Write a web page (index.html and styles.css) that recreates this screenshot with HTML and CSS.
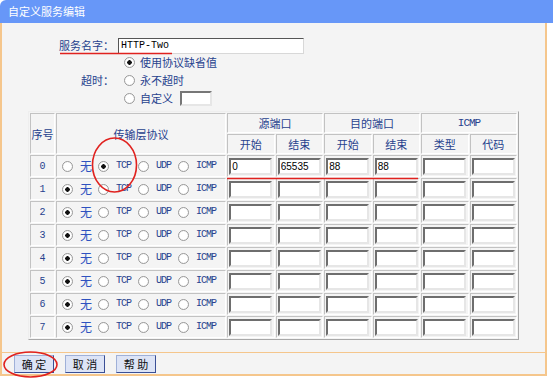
FILE: index.html
```html
<!DOCTYPE html>
<html lang="zh-CN">
  <head>
    <meta charset="UTF-8" />
    <title>自定义服务编辑</title>
    <link rel="stylesheet" href="styles.css">
  </head>
  <body>
    <div class="page">
      <div class="title">自定义服务编辑</div>

      <div class="panel">
        <!-- Service name + timeout -->
        <div class="form-grid">
          <label class="lbl">服务名字：</label>
          <div><input class="name-input" type="text" value="HTTP-Two"></div>

          <label class="lbl lbl-timeout">超时：</label>
          <div class="opt"><input type="radio" name="tmo" checked><span>使用协议缺省值</span></div>
          <div class="opt"><input type="radio" name="tmo"><span>永不超时</span></div>
          <div class="opt"><input type="radio" name="tmo"><span>自定义</span><input class="tmo-input" type="text"></div>
        </div>

        <!-- Rule table -->
        <table class="rules">
          <colgroup>
            <col class="c-no">
            <col class="c-proto">
            <col span="6" class="c-port">
          </colgroup>
          <thead>
            <tr>
              <th rowspan="2">序号</th>
              <th rowspan="2">传输层协议</th>
              <th colspan="2">源端口</th>
              <th colspan="2">目的端口</th>
              <th colspan="2" class="mono">ICMP</th>
            </tr>
            <tr>
              <th>开始</th><th>结束</th>
              <th>开始</th><th>结束</th>
              <th>类型</th><th>代码</th>
            </tr>
          </thead>
          <tbody id="rule-rows"></tbody>
        </table>
      </div>

      <div class="footer">
        <button class="btn">确 定</button>
        <button class="btn">取 消</button>
        <button class="btn">帮 助</button>
      </div>

      <!-- red annotation marks drawn over the screenshot -->
      <svg class="marks" width="553" height="379" viewBox="0 0 553 379">
        <line x1="60" y1="53.5" x2="172" y2="53.5" />
        <ellipse cx="114.5" cy="165" rx="22" ry="27" />
        <line x1="227" y1="178.5" x2="418" y2="178.5" />
        <ellipse cx="30.5" cy="364.5" rx="26.5" ry="12.5" />
      </svg>
    </div>

    <script>
      // rows 0..7, row 0 is the TCP rule
      const rows = [
        { proto: "tcp", ports: ["0", "65535", "88", "88", "", ""] },
      ];
      for (let i = 1; i < 8; i++) rows.push({ proto: "none", ports: ["", "", "", "", "", ""] });

      const body = document.getElementById("rule-rows");
      rows.forEach((r, i) => {
        const tr = document.createElement("tr");
        const protos = [["none", "无", "cjk"], ["tcp", "TCP", "mono"], ["udp", "UDP", "mono"], ["icmp", "ICMP", "mono"]];
        const radios = protos.map(([v, t, c]) =>
          `<label class="proto"><input type="radio" name="p${i}" ${r.proto === v ? "checked" : ""}><span class="${c}">${t}</span></label>`
        ).join("");
        tr.innerHTML =
          `<td class="no">${i}</td><td class="protos">${radios}</td>` +
          r.ports.map((p) => `<td><input class="port" type="text" value="${p}"></td>`).join("");
        body.appendChild(tr);
      });
    </script>
  </body>
</html>
```

FILE: styles.css
```css
body {
  margin: 0;
  background: #fff;
  font-family: "Noto Sans CJK SC", "DejaVu Sans", sans-serif;
  font-size: 11px;
  color: #27428e;
}

.page {
  position: relative;
  width: 553px;
  height: 379px;
}

.title {
  height: 23px;
  line-height: 23px;
  padding-left: 8px;
  background: #6797f8;
  color: #fff;
  font-size: 11px;
  border-top-left-radius: 6px;
}

.panel {
  width: 547px;
  height: 329px;
  box-sizing: border-box;
  padding-top: 13px;
  background: #f4f4f4;
  border-left: 2px solid #f5c68c;
  border-right: 2px solid #f5c68c;
}

.form-grid {
  display: grid;
  grid-template-columns: 112px auto;
  grid-template-rows: 17px 18px 18px 18px;
  column-gap: 4px;
  align-items: center;
}

.lbl {
  text-align: right;
  font-size: 11px;
}

.lbl-timeout {
  grid-row: 2 / 5;
}

.name-input {
  width: 186px;
  height: 16px;
  box-sizing: border-box;
  padding: 0 2px;
  background: #fff;
  border: 1px solid #d8d8d8;
  border-top-color: #555;
  border-left-color: #555;
  font-family: "Liberation Mono", monospace;
  font-size: 10px;
  color: #000;
  outline: none;
}

.opt {
  grid-column: 2;
  display: flex;
  align-items: center;
  gap: 5px;
  padding-left: 6px;
  line-height: 1;
}

.tmo-input {
  width: 32px;
  height: 15px;
  box-sizing: border-box;
  margin-left: 2px;
  background: #fff;
  border: 2px solid #e6e6e6;
  border-top-color: #777;
  border-left-color: #777;
}

input[type="radio"] {
  appearance: none;
  margin: 0;
  width: 11px;
  height: 11px;
  border-radius: 50%;
  border: 1px solid #9a9a9a;
  background: radial-gradient(circle, #fff 55%, #e4e4e4 100%);
  flex: none;
}

input[type="radio"]:checked {
  background: radial-gradient(circle, #111 0 2px, #fff 2.5px 55%, #e4e4e4 100%);
}

/* rule table */
.rules {
  margin: 4px 0 0 26px;
  width: 491px;
  table-layout: fixed;
  border-collapse: separate;
  border-spacing: 1px;
  border: 1px solid #a8a8a8;
  border-top-color: #eee;
  border-left-color: #eee;
  background: #f4f4f4;
}

.c-no { width: 25px; }
.c-proto { width: 170px; }
.c-port { width: 47.5px; }

.rules th,
.rules td {
  box-sizing: border-box;
  padding: 0;
  border: 1px solid #fff;
  border-top-color: #c2c2c2;
  border-left-color: #c2c2c2;
  text-align: center;
  font-weight: normal;
  background: #f4f4f4;
}

.rules th {
  height: 20px;
  font-size: 11px;
}

.rules td {
  height: 22px;
}

.rules td.no {
  font-family: "Liberation Mono", monospace;
  font-size: 10px;
}

.mono {
  font-family: "Liberation Mono", monospace;
  font-size: 10px;
  letter-spacing: -1px;
}

.cjk {
  font-size: 12px;
  color: #2e52c0;
}

.rules td.protos {
  text-align: left;
  padding-left: 5px;
  white-space: nowrap;
  font-size: 0;
}

.proto {
  display: inline-flex;
  align-items: center;
  gap: 7px;
  width: 40px;
  line-height: 1;
  vertical-align: middle;
}

.proto:first-child {
  width: 36px;
}

.port {
  display: block;
  margin: 0 auto;
  width: 43px;
  height: 17px;
  box-sizing: border-box;
  padding: 0 1px;
  background: #fff;
  border: 2px solid #e6e6e6;
  border-top-color: #6e6e6e;
  border-left-color: #6e6e6e;
  font-family: "Liberation Sans", sans-serif;
  font-size: 10px;
  color: #000;
  outline: none;
}

.footer {
  width: 547px;
  height: 24px;
  box-sizing: border-box;
  display: flex;
  align-items: center;
  gap: 11px;
  padding-left: 12px;
  background: #f4f4f4;
  border: 2px solid #f5c68c;
  border-top-width: 1px;
}

.btn {
  width: 40px;
  height: 18px;
  padding: 0;
  background: #dde4f6;
  border: 1px solid #3a4f96;
  border-top-color: #9fb0d8;
  border-left-color: #9fb0d8;
  font-family: "Noto Sans CJK SC", sans-serif;
  font-size: 11px;
  color: #111;
  cursor: pointer;
}

.marks {
  position: absolute;
  left: 0;
  top: 0;
  pointer-events: none;
}

.marks line,
.marks ellipse {
  fill: none;
  stroke: #e0221f;
  stroke-width: 1.6;
}
```
